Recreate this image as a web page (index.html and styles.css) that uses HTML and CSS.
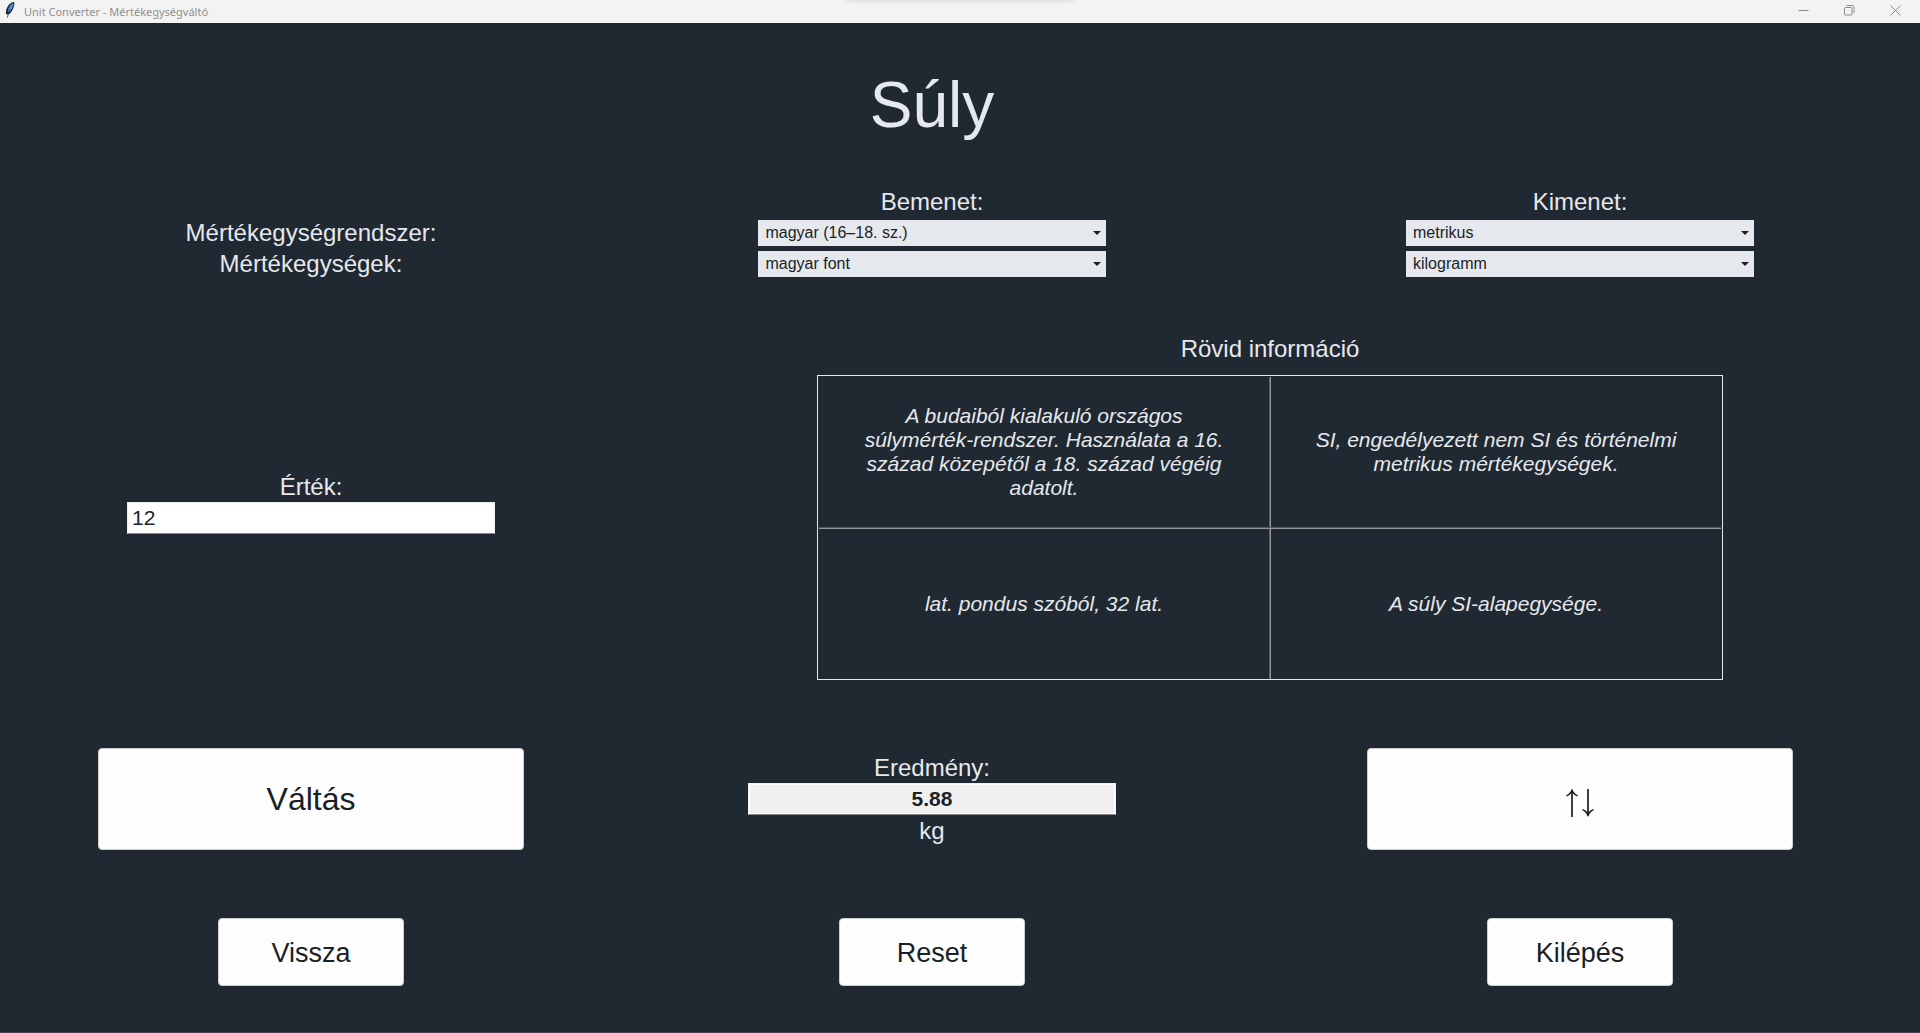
FILE: index.html
```html
<!DOCTYPE html>
<html lang="hu">
<head>
<meta charset="utf-8">
<meta name="viewport" content="width=device-width, initial-scale=1">
<title>Unit Converter - Mértékegységváltó</title>
<link rel="stylesheet" href="styles.css">
</head>
<body>
<header class="titlebar">
  <svg class="feather" width="10" height="16" viewBox="0 0 10 16" aria-hidden="true">
    <path d="M8.700 0C5 .5 1.500 4.500 1 9.500L.800 12l2.200.5C6 11.500 8.800 7 9.400 1z" fill="#17202c"/>
    <path d="M8.400 1C5.500 2.500 3.200 5 2.600 10.600 5.800 9.500 8 6 8.400 1z" fill="#4f93e6"/>
    <path d="M5 7C4 9.500 3 12 2.500 15.500" fill="none" stroke="#1a2a44" stroke-width=".8"/>
  </svg>
  <span class="titlebar-text">Unit Converter - Mértékegységváltó</span>
  <div class="window-buttons">
    <button type="button" class="window-button" aria-label="Kis méret"><svg width="11" height="11" viewBox="0 0 11 11"><path d="M.5 5.500h10"/></svg></button>
    <button type="button" class="window-button" aria-label="Előző méret"><svg width="11" height="11" viewBox="0 0 11 11"><rect x=".5" y="2.500" width="7.500" height="7.500" rx="1"/><path d="M2.500.5h5.500a2 2 0 0 1 2 2v5.500"/></svg></button>
    <button type="button" class="window-button" aria-label="Bezárás"><svg width="11" height="11" viewBox="0 0 11 11"><path d="M.5.5l10 10M10.500.5l-10 10"/></svg></button>
  </div>
  <div class="snap-shadow"></div>
</header>
<main class="converter">
  <div class="heading-row">
    <h1 class="heading">Súly</h1>
  </div>

  <div class="units units-names">
    <span>Mértékegységrendszer:</span>
    <span>Mértékegységek:</span>
  </div>
  <div class="units">
    <span>Bemenet:</span>
    <div class="combo">
      <select class="combo-select" aria-label="Bemenet: mértékegységrendszer"><option>magyar (16–18. sz.)</option></select>
    </div>
    <div class="combo">
      <select class="combo-select" aria-label="Bemenet: mértékegység"><option>magyar font</option></select>
    </div>
  </div>
  <div class="units">
    <span>Kimenet:</span>
    <div class="combo">
      <select class="combo-select" aria-label="Kimenet: mértékegységrendszer"><option>metrikus</option></select>
    </div>
    <div class="combo">
      <select class="combo-select" aria-label="Kimenet: mértékegység"><option>kilogramm</option></select>
    </div>
  </div>

  <div class="field">
    <label for="value">Érték:</label>
    <input class="entry" id="value" type="text" value="12">
  </div>
  <section class="info">
    <h2 class="info-title">Rövid információ</h2>
    <div class="info-box">
      <p class="info-text">A budaiból kialakuló országos súlymérték-rendszer. Használata a 16. század közepétől a 18. század végéig adatolt.</p>
      <div class="rule-v"></div>
      <p class="info-text">SI, engedélyezett nem SI és történelmi metrikus mértékegységek.</p>
      <div class="rule-h"></div>
      <p class="info-text">lat. pondus szóból, 32 lat.</p>
      <div class="rule-v"></div>
      <p class="info-text">A súly SI-alapegysége.</p>
    </div>
  </section>

  <button type="button" class="button button-large">Váltás</button>
  <div class="field">
    <label for="result">Eredmény:</label>
    <input class="entry entry-result" id="result" type="text" value="5.88" readonly>
    <span>kg</span>
  </div>
  <button type="button" class="button button-large" aria-label="Csere">
    <svg class="swap-icon" width="28" height="38" viewBox="0 0 28 38" aria-hidden="true">
      <path d="M6 10v27M22 9v27" fill="none" stroke="#1a1f26" stroke-width="1.700"/>
      <path d="M6 8.500c1 3 3 5.500 6 7l-.7.900C9 15.500 7.500 14.300 6 12.500 4.500 14.300 3 15.500.7 16.400L0 15.500c3-1.500 5-4 6-7zM22 37c1-3 3-5.500 6-7l-.7-.9c-2.300.9-3.800 2.100-5.300 3.900-1.500-1.800-3-3-5.300-3.900L16 30c3 1.500 5 4 6 7z" fill="#1a1f26"/>
    </svg>
  </button>

  <button type="button" class="button">Vissza</button>
  <button type="button" class="button">Reset</button>
  <button type="button" class="button">Kilépés</button>
</main>
</body>
</html>
```
FILE: styles.css
```css
* {
  box-sizing: border-box;
}

body {
  margin: 0;
  min-height: 100vh;
  display: flex;
  flex-direction: column;
  background: #202932;
  color: #e5e8ed;
  font-family: "Liberation Sans", Arial, sans-serif;
  font-size: 24px;
  line-height: 31px;
}

/* Window frame */
.titlebar {
  position: relative;
  display: flex;
  align-items: center;
  height: 23px;
  padding: 0 2px 3px 5px;
  overflow: hidden;
  background: #f3f3f3;
  color: #8f8f8f;
}

.titlebar-text {
  margin-left: 9px;
  padding-top: 3px;
  font-family: "Noto Sans", "Open Sans", sans-serif;
  font-size: 11px;
  line-height: 16px;
}

.window-buttons {
  display: flex;
  margin-left: auto;
}

.window-button {
  display: flex;
  align-items: center;
  justify-content: center;
  width: 46px;
  height: 20px;
  padding: 0;
  border: 0;
  background: none;
}

.window-button svg {
  fill: none;
  stroke: #8a8a8a;
}

.snap-shadow {
  position: absolute;
  top: -10px;
  left: 50%;
  width: 228px;
  height: 10px;
  margin-left: -114px;
  border-radius: 6px;
  box-shadow: 0 0 6px rgba(0, 0, 0, 0.15);
}

/* Converter form */
.converter {
  flex: 1;
  display: grid;
  grid-template-columns: 622fr 620fr 676fr;
  grid-template-rows: 163fr 93fr 446fr 147fr 160fr;
  align-items: center;
  justify-items: center;
  padding-right: 2px;
  border-bottom: 1px solid #3a434e;
}

.heading-row {
  grid-column: 1 / 4;
  justify-self: stretch;
  display: grid;
  grid-template-columns: subgrid;
}

.heading {
  grid-column: 2;
  margin: 0;
  font-size: 64px;
  font-weight: 400;
  line-height: 76px;
  text-align: center;
}

.units {
  display: grid;
  grid-template-rows: repeat(3, 31px);
  align-items: center;
  justify-items: center;
  width: 56%;
  max-width: 348px;
}

.units-names {
  padding-top: 31px;
  grid-template-rows: repeat(2, 31px);
}

.combo {
  position: relative;
  display: flex;
  width: 100%;
}

.combo::after {
  content: "";
  position: absolute;
  top: 11px;
  right: 5px;
  border: 4px solid transparent;
  border-top-color: #1a1f26;
  border-bottom: 0;
  pointer-events: none;
}

.combo-select {
  appearance: none;
  width: 100%;
  height: 26px;
  padding: 0 20px 0 7px;
  border: 0;
  border-radius: 0;
  background: #e5e8ed;
  color: #1a1f26;
  font: 16px/26px "Liberation Sans", Arial, sans-serif;
}

.field {
  display: flex;
  flex-direction: column;
  align-items: center;
  width: 60%;
  max-width: 368px;
}

.entry {
  width: 100%;
  height: 32px;
  padding: 0 4px;
  border: 1px solid #f0f0f0;
  border-bottom-color: #868686;
  border-radius: 0;
  background: #fff;
  color: #1a1f26;
  font: 21px/28px "Liberation Sans", Arial, sans-serif;
}

.entry-result {
  background: #f0f0f0;
  box-shadow: inset 0 0 0 1px #fff;
  font-weight: 700;
  text-align: center;
}

.info {
  grid-column: span 2;
  width: 70%;
  max-width: 906px;
  padding-top: 8px;
}

.info-title {
  margin: 0 0 11px;
  font-size: 24px;
  font-weight: 400;
  text-align: center;
}

.info-box {
  display: grid;
  grid-template-columns: 1fr 2px 1fr;
  grid-template-rows: minmax(150px, 1fr) 2px minmax(150px, 1fr);
  padding: 1px 1px 0;
  border: 1px solid #e6e6e6;
}

.info-text {
  align-self: center;
  justify-self: center;
  max-width: 400px;
  margin: 0;
  padding: 0 16px;
  font-size: 21px;
  font-style: italic;
  line-height: 24px;
  text-align: center;
}

.rule-v {
  border-left: 1px solid #55595e;
  border-right: 1px solid #96989b;
}

.rule-h {
  grid-column: 1 / 4;
  border-top: 1px solid #55595e;
  border-bottom: 1px solid #96989b;
}

.button {
  width: 30%;
  max-width: 186px;
  height: 68px;
  padding: 1px 0 0;
  border: 1px solid #ccc;
  border-radius: 4px;
  background: #fdfdfd;
  color: #1a1f26;
  font: 27px/32px "Liberation Sans", Arial, sans-serif;
}

.button-large {
  width: 70%;
  max-width: 426px;
  height: 102px;
  font-size: 32px;
}

.swap-icon {
  display: block;
  margin: 0 auto;
}
```
